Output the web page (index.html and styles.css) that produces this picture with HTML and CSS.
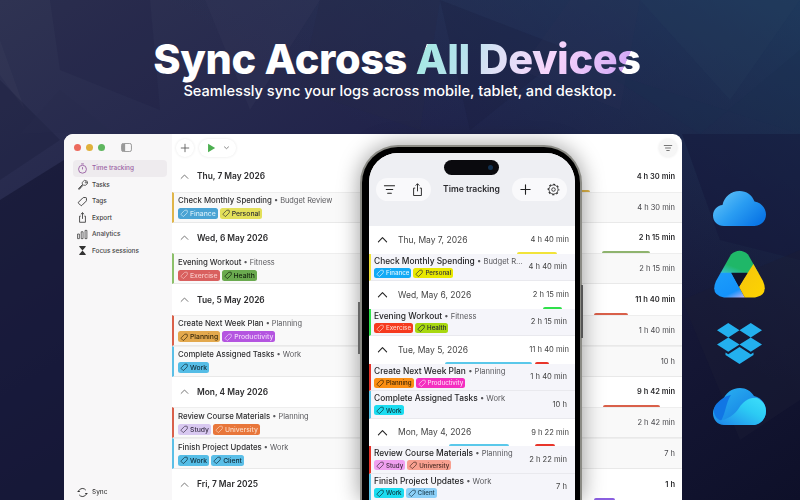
FILE: index.html
```html
<!DOCTYPE html>
<html lang="en">
<head>
    <meta charset="UTF-8">
    <title>Sync Across All Devices</title>
    <link rel="stylesheet" href="styles.css">
</head>
<body>
    <svg width="0" height="0" class="defs">
        <symbol id="tag" viewBox="0 0 12 12"><path d="M1.8 6.6 6.4 2a1 1 0 0 1 .7-.3h2.4a.8.8 0 0 1 .8.8v2.4a1 1 0 0 1-.3.7L5.4 10.200a1 1 0 0 1-1.400 0L1.800 8a1 1 0 0 1 0-1.400Z" fill="none" stroke="currentColor" stroke-width="1"/></symbol>
        <symbol id="up" viewBox="0 0 12 12"><path d="M1.500 8.500 6 4l4.500 4.500" fill="none" stroke="currentColor" stroke-width="1.200" stroke-linecap="round" stroke-linejoin="round"/></symbol>
    </svg>

    <svg class="backdrop" viewBox="0 0 800 500" preserveAspectRatio="none">
        <defs>
            <linearGradient id="bgFill" x1="0" y1="0" x2="1" y2="1">
                <stop offset="0" stop-color="#2f3352"/>
                <stop offset=".4" stop-color="#20224a"/>
                <stop offset="1" stop-color="#0e1029"/>
            </linearGradient>
            <linearGradient id="bgTeal" x1="0" y1="1" x2="1" y2="0">
                <stop offset=".6" stop-color="#1f3a5c" stop-opacity="0"/>
                <stop offset="1" stop-color="#1f4466" stop-opacity=".7"/>
            </linearGradient>
        </defs>
        <rect width="800" height="500" fill="url(#bgFill)"/>
        <rect width="800" height="500" fill="url(#bgTeal)"/>
        <polygon points="0,40 25,110 0,75" fill="#3a3e5c" opacity=".3"/>
        <polygon points="50,0 150,0 160,110 60,70" fill="#1b1d3e" opacity=".22"/>
        <polygon points="205,0 320,0 250,110" fill="#33375a" opacity=".35"/>
        <polygon points="320,0 440,0 420,130 300,90" fill="#262948" opacity=".35"/>
        <polygon points="440,0 570,50 470,130" fill="#191b3c" opacity=".25"/>
        <polygon points="570,0 640,0 620,110 520,70" fill="#2f3354" opacity=".2"/>
        <polygon points="640,0 800,0 730,100" fill="#264060" opacity=".2"/>
        <polygon points="0,80 60,140 0,180" fill="#1a1c3c" opacity=".35"/>
        <polygon points="60,90 110,130 20,134" fill="#292c4c" opacity=".3"/>
        <polygon points="600,70 700,134 800,50 800,134" fill="#1c2e50" opacity=".3"/>
        <polygon points="682,134 800,134 800,260 720,240" fill="#14163a" opacity=".45"/>
        <polygon points="682,300 800,250 800,400 740,440" fill="#1a1c36" opacity=".45"/>
        <polygon points="0,200 64,160 64,500 0,500" fill="#121431" opacity=".6"/>
    </svg>

    <header class="hero">
        <h1>Sync Across <span class="shine">All Devices</span></h1>
        <p>Seamlessly sync your logs across mobile, tablet, and desktop.</p>
    </header>

    <div class="mac">
        <aside class="side">
            <div class="lights">
                <i class="light red"></i><i class="light amber"></i><i class="light green"></i>
                <svg class="panel-ico" viewBox="0 0 12 10"><rect x=".5" y=".5" width="11" height="9" rx="2" fill="none" stroke="#777" stroke-width=".8"/><rect x="1" y="1" width="3.500" height="8" fill="#999"/></svg>
            </div>
            <nav class="nav">
                <a class="nav-item active"><svg viewBox="0 0 12 12"><circle cx="6" cy="6.800" r="4.300" fill="none" stroke="currentColor"/><path d="M6 4.500v2.500M4.500 1h3" stroke="currentColor" fill="none"/></svg>Time tracking</a>
                <a class="nav-item"><svg viewBox="0 0 12 12"><path d="M1.200 10.800 6 6M6 6 5.500 4 8 1.500l2.500.5L9 3.500l.5 1 1-.2.800-1.500.2 2.200L9 7 7 6.500 2.200 11.500Z" fill="none" stroke="#333" stroke-width=".8" stroke-linejoin="round"/></svg>Tasks</a>
                <a class="nav-item"><svg viewBox="0 0 12 12"><use href="#tag" color="#333"/></svg>Tags</a>
                <a class="nav-item"><svg viewBox="0 0 12 12"><path d="M4 4.500H2.800v6.700h6.400V4.500H8M6 7.500V.8M4.200 2.500 6 .8l1.800 1.700" fill="none" stroke="#333" stroke-width=".9"/></svg>Export</a>
                <a class="nav-item"><svg viewBox="0 0 12 12"><path d="M.6 5.500h2v5h-2zM4.600 3h2v7.500h-2zM8.800 1.500h2v9h-2z" fill="none" stroke="#333" stroke-width=".8"/></svg>Analytics</a>
                <a class="nav-item"><svg viewBox="0 0 12 12"><path d="M2.500 1h7v1L6 6l3.500 4v1h-7v-1L6 6 2.500 2Z" fill="#333"/></svg>Focus sessions</a>
            </nav>
            <a class="nav-item sync"><svg viewBox="0 0 12 12"><path d="M2 4a4.500 4.500 0 0 1 7.600-.6M10 8a4.500 4.500 0 0 1-7.600.6" fill="none" stroke="#333" stroke-width="1"/><path d="M0 5.500h3.500L2 3.500zM12 6.500H8.500l1.500 2z" fill="#333"/></svg>Sync</a>
        </aside>
        <main class="log">
            <div class="toolbar">
                <span class="round"><svg viewBox="0 0 12 12"><path d="M6 1.500v9M1.500 6h9" stroke="#555" stroke-width="1" stroke-linecap="round"/></svg></span>
                <span class="round play"><svg viewBox="0 0 12 12"><path d="M2.500 1 11 6l-8.500 5Z" fill="#4caf50"/></svg><svg class="caret" viewBox="0 0 12 12"><path d="M2 4.500 6 8l4-3.500" fill="none" stroke="#666" stroke-width="1.300"/></svg></span>
                <span class="round filter"><svg viewBox="0 0 12 12"><path d="M1.500 3h9M3 6h6M4.500 9h3" stroke="#777" stroke-width="1.200" stroke-linecap="round"/></svg></span>
            </div>

            <div class="day">
                <svg class="up"><use href="#up"/></svg><b>Thu, 7 May 2026</b><b class="total">4 h 30 min</b>
                <i class="bar" style="left:403px;width:15px;background:#e0b64a"></i>
            </div>
            <div class="row amber">
                <div><p class="task">Check Monthly Spending <span>• Budget Review</span></p>
                <div class="chips"><span class="chip c-finance"><svg><use href="#tag"/></svg>Finance</span><span class="chip c-personal"><svg><use href="#tag"/></svg>Personal</span></div></div>
                <span class="dur">4 h 30 min</span>
            </div>

            <div class="day">
                <svg class="up"><use href="#up"/></svg><b>Wed, 6 May 2026</b><b class="total">2 h 15 min</b>
                <i class="bar" style="left:430px;width:48px;background:#8fb46e"></i>
            </div>
            <div class="row lime">
                <div><p class="task">Evening Workout <span>• Fitness</span></p>
                <div class="chips"><span class="chip c-exercise"><svg><use href="#tag"/></svg>Exercise</span><span class="chip c-health"><svg><use href="#tag"/></svg>Health</span></div></div>
                <span class="dur">2 h 15 min</span>
            </div>

            <div class="day">
                <svg class="up"><use href="#up"/></svg><b>Tue, 5 May 2026</b><b class="total">11 h 40 min</b>
                <i class="bar" style="left:422px;width:34px;background:#d9604a"></i>
            </div>
            <div class="row rust">
                <div><p class="task">Create Next Week Plan <span>• Planning</span></p>
                <div class="chips"><span class="chip c-planning"><svg><use href="#tag"/></svg>Planning</span><span class="chip c-productivity"><svg><use href="#tag"/></svg>Productivity</span></div></div>
                <span class="dur">1 h 40 min</span>
            </div>
            <div class="row sky">
                <div><p class="task">Complete Assigned Tasks <span>• Work</span></p>
                <div class="chips"><span class="chip c-work"><svg><use href="#tag"/></svg>Work</span></div></div>
                <span class="dur">10 h</span>
            </div>

            <div class="day">
                <svg class="up"><use href="#up"/></svg><b>Mon, 4 May 2026</b><b class="total">9 h 42 min</b>
                <i class="bar" style="left:431px;width:57px;background:#d9604a"></i>
            </div>
            <div class="row rust">
                <div><p class="task">Review Course Materials <span>• Planning</span></p>
                <div class="chips"><span class="chip c-study"><svg><use href="#tag"/></svg>Study</span><span class="chip c-university"><svg><use href="#tag"/></svg>University</span></div></div>
                <span class="dur">2 h 42 min</span>
            </div>
            <div class="row sky">
                <div><p class="task">Finish Project Updates <span>• Work</span></p>
                <div class="chips"><span class="chip c-work"><svg><use href="#tag"/></svg>Work</span><span class="chip c-client"><svg><use href="#tag"/></svg>Client</span></div></div>
                <span class="dur">7 h</span>
            </div>

            <div class="day">
                <svg class="up"><use href="#up"/></svg><b>Fri, 7 Mar 2025</b><b class="total">1 h</b>
                <i class="bar" style="left:422px;width:21px;background:#8a5fe0"></i>
            </div>
        </main>
    </div>

    <div class="phone">
        <div class="screen">
            <div class="island"><i></i></div>
            <div class="nav-bar">
                <span class="pill">
                    <svg viewBox="0 0 14 14"><path d="M1.500 3h11M3.500 7h7M5 11h4" stroke="#222" stroke-width="1.100" stroke-linecap="round"/></svg>
                    <svg viewBox="0 0 14 14"><path d="M4.500 5.500H2.800v8h8.400v-8H9.500M7 9V.8M5 2.800 7 .8l2 2" fill="none" stroke="#222" stroke-width="1"/></svg>
                </span>
                <b class="nav-title">Time tracking</b>
                <span class="pill">
                    <svg viewBox="0 0 14 14"><path d="M7 2v10M2 7h10" stroke="#222" stroke-width="1.200" stroke-linecap="round"/></svg>
                    <svg viewBox="0 0 14 14"><circle cx="7" cy="7" r="1.900" fill="none" stroke="#222" stroke-width=".9"/><circle cx="7" cy="7" r="5.700" fill="none" stroke="#222" stroke-width="1.200" stroke-dasharray="2.200 2.280" stroke-dashoffset="1.100"/><circle cx="7" cy="7" r="4.900" fill="none" stroke="#222" stroke-width=".8"/></svg>
                </span>
            </div>

            <div class="pday">
                <svg class="up"><use href="#up"/></svg><span>Thu, May 7, 2026</span><span class="total">4 h 40 min</span>
                <i class="bar" style="left:148px;width:40px;background:#f1e33a"></i>
            </div>
            <div class="prow yellow">
                <div class="pbody"><p class="task">Check Monthly Spending <span>• Budget R...</span></p>
                <div class="chips"><span class="chip c-finance"><svg><use href="#tag"/></svg>Finance</span><span class="chip c-personal"><svg><use href="#tag"/></svg>Personal</span></div></div>
                <span class="dur">4 h 40 min</span>
            </div>

            <div class="pday">
                <svg class="up"><use href="#up"/></svg><span>Wed, May 6, 2026</span><span class="total">2 h 15 min</span>
                <i class="bar" style="left:174px;width:19px;background:#2fe04a"></i>
            </div>
            <div class="prow green">
                <div class="pbody"><p class="task">Evening Workout <span>• Fitness</span></p>
                <div class="chips"><span class="chip c-exercise"><svg><use href="#tag"/></svg>Exercise</span><span class="chip c-health"><svg><use href="#tag"/></svg>Health</span></div></div>
                <span class="dur">2 h 15 min</span>
            </div>

            <div class="pday">
                <svg class="up"><use href="#up"/></svg><span>Tue, May 5, 2026</span><span class="total">11 h 40 min</span>
                <i class="bar" style="left:76px;width:87px;background:#5ac8ea"></i>
                <i class="bar" style="left:166px;width:14px;background:#e8352a"></i>
            </div>
            <div class="prow red">
                <div class="pbody"><p class="task">Create Next Week Plan <span>• Planning</span></p>
                <div class="chips"><span class="chip c-planning"><svg><use href="#tag"/></svg>Planning</span><span class="chip c-productivity"><svg><use href="#tag"/></svg>Productivity</span></div></div>
                <span class="dur">1 h 40 min</span>
            </div>
            <div class="prow blue">
                <div class="pbody"><p class="task">Complete Assigned Tasks <span>• Work</span></p>
                <div class="chips"><span class="chip c-work"><svg><use href="#tag"/></svg>Work</span></div></div>
                <span class="dur">10 h</span>
            </div>

            <div class="pday">
                <svg class="up"><use href="#up"/></svg><span>Mon, May 4, 2026</span><span class="total">9 h 22 min</span>
                <i class="bar" style="left:80px;width:60px;background:#5ac8ea"></i>
                <i class="bar" style="left:166px;width:20px;background:#e8352a"></i>
            </div>
            <div class="prow red">
                <div class="pbody"><p class="task">Review Course Materials <span>• Planning</span></p>
                <div class="chips"><span class="chip c-study"><svg><use href="#tag"/></svg>Study</span><span class="chip c-university"><svg><use href="#tag"/></svg>University</span></div></div>
                <span class="dur">2 h 22 min</span>
            </div>
            <div class="prow blue">
                <div class="pbody"><p class="task">Finish Project Updates <span>• Work</span></p>
                <div class="chips"><span class="chip c-work"><svg><use href="#tag"/></svg>Work</span><span class="chip c-client"><svg><use href="#tag"/></svg>Client</span></div></div>
                <span class="dur">7 h</span>
            </div>
        </div>
    </div>

    <div class="services">
        <svg class="cloud-ico" viewBox="0 0 53 35">
            <defs><linearGradient id="ic" x1="0" y1="0" x2="1" y2=".7"><stop offset="0" stop-color="#6ccbfa"/><stop offset=".55" stop-color="#2a9df2"/><stop offset="1" stop-color="#0b77e6"/></linearGradient></defs>
            <path d="M11 35C4.500 35 0 30.500 0 24.500 0 18.500 4.500 14.500 9.500 14 11 6 18 0 26.500 0 33.500 0 39 4 41.500 10.500 48 11.500 53 17 53 23.500 53 30 48 35 41.500 35Z" fill="url(#ic)"/>
        </svg>
        <svg class="drive-ico" viewBox="0 0 51 48">
            <defs>
                <clipPath id="tri"><path d="M17 4.500Q25.500-3 34 4.500L49 31Q55 45 41 47.500L10 47.500Q-4 45 2 31Z"/></clipPath>
                <linearGradient id="dg" x1="0" y1="1" x2=".6" y2=".3"><stop offset="0" stop-color="#3fc6e6"/><stop offset=".5" stop-color="#1fb768"/></linearGradient>
                <linearGradient id="db" x1=".3" y1="0" x2=".9" y2="1"><stop offset="0" stop-color="#1b9cfb"/><stop offset=".7" stop-color="#1492fa"/><stop offset="1" stop-color="#b3b0f2"/></linearGradient>
                <linearGradient id="dy" x1=".3" y1=".3" x2="1" y2="1"><stop offset="0" stop-color="#f7c80a"/><stop offset="1" stop-color="#fdd500"/></linearGradient>
            </defs>
            <g clip-path="url(#tri)">
                <rect width="51" height="23" fill="url(#dg)"/>
                <polygon points="0,22.700 17.300,22.700 25,36.700 31,48 0,48" fill="url(#db)"/>
                <polygon points="40,13 51,25 51,48 31,48 25,36.700" fill="url(#dy)"/>
                <polygon points="17.300,22.700 33.300,22.700 25,36.700" fill="#10122c"/>
            </g>
        </svg>
        <svg class="box-ico" viewBox="0 0 45 41">
            <path d="M11.250 0 0 7.200l11.250 7.200 11.250-7.200ZM33.750 0 22.500 7.200l11.250 7.200L45 7.200ZM0 21.600l11.250 7.200 11.250-7.200-11.250-7.200ZM33.750 14.400 22.500 21.600l11.250 7.200L45 21.600Z" fill="#23b0ee"/>
            <polygon points="22.500,24 33.750,31.200 36.500,29.500 36.500,32 22.500,41 8.500,32 8.500,29.500 11.250,31.200" fill="#23b0ee"/>
        </svg>
        <svg class="one-ico" viewBox="0 0 53 37">
            <defs>
                <linearGradient id="o1" x1="0" y1="0" x2="1" y2="1"><stop offset="0" stop-color="#2bb6f2"/><stop offset="1" stop-color="#0f6fe0"/></linearGradient>
                <linearGradient id="o2" x1="0" y1="1" x2="1" y2="0"><stop offset="0" stop-color="#1f86ea"/><stop offset=".6" stop-color="#2ccbf4"/><stop offset="1" stop-color="#3fe0fb"/></linearGradient>
            </defs>
            <path d="M11 37C4.500 37 0 31.500 0 25.500 0 19.500 4 15 9.500 13.500 12 5 19 0 27 0 33 0 38 3 41 8 48 9.500 53 15.500 53 23 53 31 47 37 40 37Z" fill="url(#o1)"/>
            <path d="M2 18C6 12 12 8 18 7 13 14 13 24 8 33 2 30-1 24 2 18Z" fill="#1176e4"/>
            <path d="M4 32.500C8 35.500 12 37 16 37H40C47 37 53 31 53 23 53 17 49 12 44 10 36 9 30 14 26 20 22 26 14 33 4 32.500Z" fill="url(#o2)"/>
        </svg>
    </div>
</body>
</html>
```

FILE: styles.css
```css
* { box-sizing: border-box; }

html, body {
    margin: 0;
    height: 500px;
    overflow: hidden;
}
body {
    position: relative;
    width: 800px;
    background: #1a1c3c;
    font-family: Inter, "Liberation Sans", sans-serif;
    color: #2a2a2c;
}
p { margin: 0; }
.defs { position: absolute; }

.backdrop {
    position: absolute;
    left: 0;
    top: 0;
    width: 800px;
    height: 500px;
}

/* hero */
.hero {
    position: relative;
    padding-top: 36px;
    text-align: center;
    color: #fff;
}
.hero h1 {
    margin: 0 6px 0 0;
    font-size: 41.500px;
    line-height: 46px;
    font-weight: 800;
    letter-spacing: -.4px;
}
.hero .shine {
    background: linear-gradient(114deg, #fff 6.5%, #a6e8e4 6.6%, #b5e3ec 22%, #dfe0f6 38%, #f6d4fb 60%, #dfb8f8 82%, #d3a8f6 90%, #fff 90.1%);
    -webkit-background-clip: text;
    background-clip: text;
    color: transparent;
}
.hero p {
    margin-top: -1px;
    font-size: 14.600px;
    line-height: 20px;
    font-weight: 500;
}

/* mac window */
.mac {
    position: absolute;
    left: 64px;
    top: 134px;
    width: 618px;
    height: 366px;
    display: flex;
    background: #fff;
    border-radius: 9px 9px 0 0;
    overflow: hidden;
    filter: blur(.3px);
}
.side {
    width: 108px;
    flex: none;
    display: flex;
    flex-direction: column;
    background: #f8f7f8;
    padding-left: 9px;
    padding-right: 5px;
}
.lights {
    display: flex;
    align-items: center;
    height: 26px;
    padding-left: 1px;
    gap: 5px;
}
.light {
    width: 7px;
    height: 7px;
    border-radius: 50%;
}
.light.red { background: #ec6a5e; }
.light.amber { background: #e0b13c; }
.light.green { background: #5fb65f; }
.panel-ico {
    width: 11px;
    height: 9px;
    margin-left: 11px;
}
.nav {
    display: flex;
    flex-direction: column;
}
.nav-item {
    display: flex;
    align-items: center;
    height: 16.500px;
    padding-left: 4px;
    gap: 4px;
    font-size: 6.400px;
    font-weight: 500;
    color: #444;
    border-radius: 4px;
}
.nav-item svg {
    width: 11px;
    height: 11px;
    flex: none;
}
.nav-item.active {
    background: #eeebee;
    color: #9a62a4;
}
.sync {
    margin-top: auto;
    height: 16px;
}

.log {
    flex: 1;
    min-width: 0;
}
.toolbar {
    display: flex;
    align-items: center;
    height: 27px;
    padding: 0 5px 0 4px;
    gap: 5px;
}
.round {
    display: flex;
    align-items: center;
    justify-content: center;
    gap: 7px;
    width: 18px;
    height: 18px;
    border-radius: 9px;
    background: #fff;
    box-shadow: 0 0 3px rgba(0, 0, 0, .1);
}
.round svg {
    width: 10px;
    height: 10px;
}
.round.play { width: 37px; }
.round.play .caret { width: 7px; height: 7px; }
.round.filter { margin-left: auto; background: #f6f6f6; }

.day {
    position: relative;
    display: flex;
    align-items: center;
    height: 30.800px;
    padding: 0 7px 0 8px;
    font-size: 8.400px;
    color: #2c2c2e;
}
.day b { font-weight: 600; }
.day .up {
    width: 9px;
    height: 9px;
    margin-right: 8px;
    color: #666;
}
.total {
    margin-left: auto;
    font-size: 7.500px;
    white-space: nowrap;
}
.bar {
    position: absolute;
    bottom: 0;
    height: 2px;
    border-radius: 2px 2px 0 0;
}

.row {
    display: flex;
    align-items: center;
    justify-content: space-between;
    height: 30.800px;
    padding: 0 7px 0 4px;
    background: #f9f9f9;
    border-left: 2px solid #ccc;
    border-bottom: 1px solid #e9e9e9;
    border-top: 1px solid #eee;
}
.row.amber { border-left-color: #e0b64a; }
.row.lime { border-left-color: #8cc06a; }
.row.rust { border-left-color: #d9604a; }
.row.sky { border-left-color: #5bbfe6; }

.task {
    font-size: 7.800px;
    line-height: 11px;
    font-weight: 500;
    color: #2e2e30;
    white-space: nowrap;
}
.task span {
    font-size: 7.400px;
    font-weight: 400;
    color: #58585c;
}
.chips {
    display: flex;
    gap: 2px;
    margin-top: 2px;
}
.chip {
    display: flex;
    align-items: center;
    gap: 1.500px;
    height: 11px;
    padding: 0 2px;
    border-radius: 2.500px;
    font-size: 6.800px;
    font-weight: 500;
    white-space: nowrap;
}
.chip svg {
    width: 8.500px;
    height: 8.500px;
    flex: none;
}
.dur {
    flex: none;
    font-size: 7.500px;
    color: #48484c;
    white-space: nowrap;
}

.c-finance { background: #4aa3d4; color: #d2ecf8; }
.c-personal { background: #e3e05a; color: #333; }
.c-exercise { background: #d9605f; color: #f7c6c4; }
.c-health { background: #6aaa4f; color: #14240e; }
.c-planning { background: #e3a94e; color: #3a2a0c; }
.c-productivity { background: #b455e0; color: #f0d4fa; }
.c-work { background: #55bde6; color: #0f2c3a; }
.c-study { background: #d8c8f0; color: #3a3048; }
.c-university { background: #e8763a; color: #fbd8c2; }
.c-client { background: #5bbfe8; color: #0f2c3a; }

/* phone */
.phone {
    position: absolute;
    left: 360px;
    top: 145px;
    width: 222px;
    height: 355px;
    padding: 6px 5px 0 7px;
    background: #000;
    border: 2px solid #8a8a84;
    border-bottom: 0;
    border-radius: 38px 38px 0 0;
    box-shadow: 0 0 22px rgba(0, 0, 0, .4);
}
.phone::after {
    content: "";
    position: absolute;
    right: -3px;
    top: 138px;
    width: 2px;
    height: 53px;
    background: #555;
}
.phone::before {
    content: "";
    position: absolute;
    left: -4px;
    top: 155px;
    width: 2px;
    height: 52px;
    background: #666;
}
.screen {
    position: relative;
    height: 100%;
    background: #fff;
    border-radius: 29px 29px 0 0;
    overflow: hidden;
    filter: blur(.25px);
}
.island {
    position: absolute;
    left: 75px;
    top: 7px;
    width: 55px;
    height: 15px;
    display: flex;
    align-items: center;
    justify-content: flex-end;
    padding-right: 6px;
    background: #0a0a0e;
    border-radius: 8px;
}
.island i {
    width: 5px;
    height: 5px;
    border-radius: 50%;
    background: #12304e;
}
.nav-bar {
    display: flex;
    align-items: flex-start;
    justify-content: space-between;
    height: 73px;
    padding: 25px 8px 0 7px;
    background: #eeeff3;
}
.pill {
    display: flex;
    align-items: center;
    justify-content: space-between;
    width: 55px;
    height: 23px;
    padding: 0 7px;
    background: #f9f9fb;
    border-radius: 12px;
}
.pill svg {
    width: 13px;
    height: 13px;
}
.nav-title {
    font-size: 8.600px;
    line-height: 23px;
    font-weight: 600;
    color: #2a2a2e;
}
.pday {
    position: relative;
    display: flex;
    align-items: center;
    height: 27.500px;
    padding: 0 6px 0 8px;
    font-size: 8.500px;
    color: #444;
}
.pday .up {
    width: 11px;
    height: 11px;
    margin-right: 10px;
    color: #222;
}
.pday .total { font-size: 7.600px; }
.prow {
    display: flex;
    align-items: center;
    justify-content: space-between;
    height: 27.500px;
    padding: 0 8px 0 3px;
    background: #f5f5fa;
    border-left: 2px solid #ccc;
    border-bottom: 1px solid #e9e9ee;
}
.prow.yellow { border-left-color: #f1e33a; }
.prow.green { border-left-color: #2fe04a; }
.prow.red { border-left-color: #e8352a; }
.prow.blue { border-left-color: #5ac8ea; }
.prow .task {
    font-size: 8.400px;
    line-height: 11px;
    color: #1e1e20;
}
.prow .task span { font-size: 7.600px; }
.prow .chips { margin-top: 1px; }
.prow .chip {
    height: 10px;
    font-size: 6.200px;
}
.prow .dur {
    font-size: 7.600px;
    color: #444;
}
.prow .c-finance { background: #12aaf5; color: #e0f5ff; }
.prow .c-personal { background: #e8e800; color: #333; }
.prow .c-exercise { background: #f63a1e; color: #ffd4c8; }
.prow .c-health { background: #a8d810; color: #223; }
.prow .c-planning { background: #fb8f14; color: #3a2404; }
.prow .c-productivity { background: #f42fc0; color: #ffd4f4; }
.prow .c-work { background: #1cdcf0; color: #0a3038; }
.prow .c-study { background: #f0a0f0; color: #402a40; }
.prow .c-university { background: #f8a090; color: #4a2a22; }
.prow .c-client { background: #8cd0f8; color: #1a3a4c; }

/* storage services */
.services {
    position: absolute;
    left: 713px;
    top: 191px;
    width: 53px;
    display: flex;
    flex-direction: column;
    align-items: center;
}
.cloud-ico { width: 53px; height: 35px; }
.drive-ico { width: 51px; height: 48px; margin-top: 24px; }
.box-ico { width: 45px; height: 41px; margin-top: 25px; }
.one-ico { width: 53px; height: 37px; margin-top: 24px; }
```
